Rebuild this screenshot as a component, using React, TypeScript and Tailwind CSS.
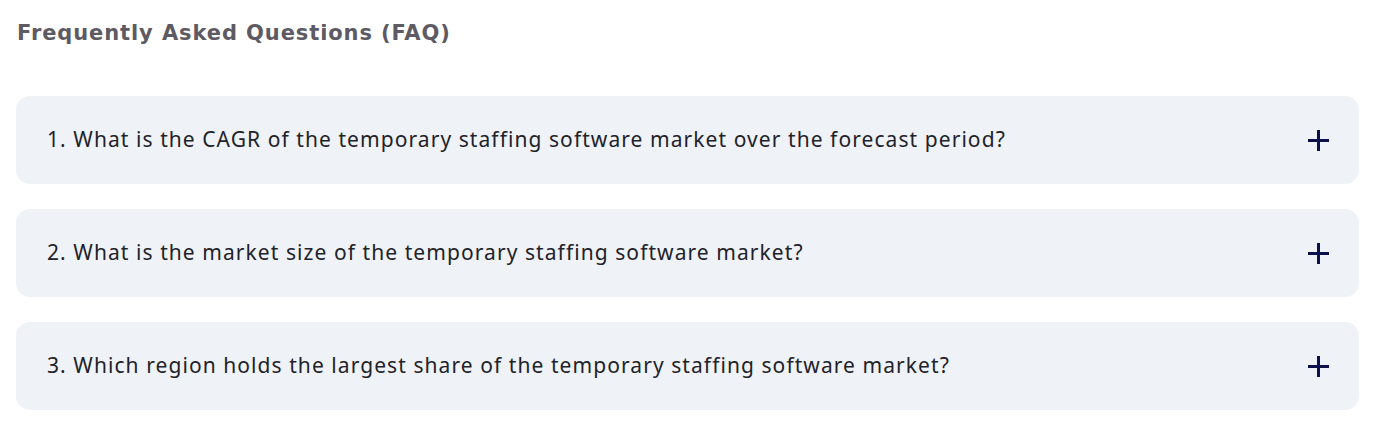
const FAQS = [
  '1. What is the CAGR of the temporary staffing software market over the forecast period?',
  '2. What is the market size of the temporary staffing software market?',
  '3. Which region holds the largest share of the temporary staffing software market?',
];

function PlusIcon() {
  return (
    <svg width="21" height="21" viewBox="0 0 21 21" className="shrink-0">
      <rect x="9" y="0" width="3" height="21" fill="#0c104b" />
      <rect x="0" y="9" width="21" height="3" fill="#0c104b" />
    </svg>
  );
}

export default function App() {
  return (
    <div className="min-h-screen bg-white pl-4 pr-6 pt-[18px]">
      <h2 className="font-['DejaVu_Sans',sans-serif] text-[21px] font-bold leading-[30px] tracking-[0.9px] text-[#5e5a63] pl-px">
        Frequently Asked Questions (FAQ)
      </h2>

      <div className="mt-[48px] flex flex-col gap-[25px]">
        {FAQS.map((q) => (
          <button
            key={q}
            className="flex h-[88px] w-full items-center justify-between rounded-[14px] bg-[#eff2f7] pl-[31px] pr-[30px] text-left"
          >
            <span className="font-['Noto_Sans',sans-serif] text-[21px] tracking-[1.07px] text-[#22222a]">{q}</span>
            <PlusIcon />
          </button>
        ))}
      </div>
    </div>
  );
}
